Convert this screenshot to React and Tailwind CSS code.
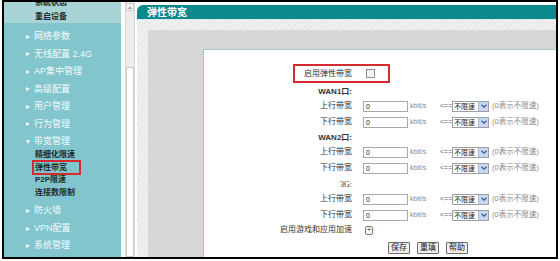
import React from "react";

const CJK = "font-['Liberation_Sans','Noto_Sans_CJK_SC',sans-serif]";

function Bullet({ open }) {
  return (
    <span className="w-[8px] flex items-center">
      {open ? (
        <span className="block w-0 h-0 border-t-[4px] border-t-white/90 border-x-[2.5px] border-x-transparent" />
      ) : (
        <span className="block w-0 h-0 border-l-[4px] border-l-white/90 border-y-[2.5px] border-y-transparent" />
      )}
    </span>
  );
}

function NavItem({ label, open }) {
  return (
    <div className="h-[17.5px] shrink-0 flex items-center pl-[22px] text-[9px] text-white/95">
      <Bullet open={open} />
      <span>{label}</span>
    </div>
  );
}

function SubItem({ label, active }) {
  return (
    <div className="h-[12.7px] shrink-0 flex items-center pl-[28px] text-[8px] font-bold text-[#1e2a2a]">
      {active ? (
        <span className="w-[49px] h-[15px] border-2 border-[#d52a2e] flex items-center pl-[1px]">
          {label}
        </span>
      ) : (
        <span className="pl-[3px]">{label}</span>
      )}
    </div>
  );
}

function Select() {
  return (
    <div className="w-[37px] h-[11px] border border-[#9aa0a8] bg-white flex">
      <div className="flex-1 text-[7px] leading-[9px] pl-[1px] text-[#222]">不限速</div>
      <div className="w-[10px] bg-[#c8d8f0] border-l border-[#aab8d0] flex items-center justify-center">
        <svg width="6" height="4" viewBox="0 0 6 4">
          <path d="M0.5 0.8 L3 3.2 L5.5 0.8" fill="none" stroke="#3a5a9a" strokeWidth="1.2" />
        </svg>
      </div>
    </div>
  );
}

function Row({ label }) {
  return (
    <div className="h-[16px] flex items-center">
      <div className="w-[148px] text-right">{label}</div>
      <input
        readOnly
        defaultValue="0"
        className="ml-[11px] w-[45px] h-[11px] border border-[#a3aab3] bg-white text-[7px] pl-[2px] text-[#222] outline-none"
      />
      <div className="ml-[2px] w-[30px] text-[7px] text-[#8a8a8a]">kbit/s</div>
      <div className="w-[12px] text-[7px] text-[#666]">{"<=="}</div>
      <Select />
      <div className="ml-[3px] text-[7.5px] text-[#8a8a8a]">(0表示不限速)</div>
    </div>
  );
}

function Header({ label, serif }) {
  return (
    <div className="h-[12px] flex items-center">
      <div
        className={
          "w-[148px] text-right " +
          (serif ? "font-['Liberation_Serif',serif] font-normal" : "font-bold")
        }
      >
        {label}
      </div>
    </div>
  );
}

function Btn({ label }) {
  return (
    <div className="w-[22px] h-[12px] border border-[#6b6b6b] rounded-[1px] bg-[#efefef] flex items-center justify-center text-[8px] text-[#222]">
      {label}
    </div>
  );
}

export default function App() {
  return (
    <div className={"w-[560px] h-[261px] bg-white overflow-hidden " + CJK}>
      <div className="ml-[2px] w-[556px] h-[259px] border-2 border-black flex overflow-hidden">
        {/* Sidebar */}
        <div className="w-[117px] shrink-0 h-full bg-[#82c5cd] flex flex-col overflow-hidden">
          <div className="h-[21px] shrink-0 bg-[#a8d4d6] overflow-hidden pl-[31px] text-[8px] font-bold text-[#1e2a2a]">
            <div className="-mt-[6px] leading-[14px]">系统状态</div>
            <div className="leading-[13px]">重启设备</div>
          </div>
          <div className="pt-[5px] shrink-0 flex flex-col">
            <NavItem label="网络参数" />
            <NavItem label="无线配置 2.4G" />
            <NavItem label="AP集中管理" />
            <NavItem label="高级配置" />
            <NavItem label="用户管理" />
            <NavItem label="行为管理" />
            <NavItem label="带宽管理" open />
            <div className="-mt-[2px] shrink-0 flex flex-col">
              <SubItem label="精细化限速" />
              <SubItem label="弹性带宽" active />
              <SubItem label="P2P限速" />
              <SubItem label="连接数限制" />
            </div>
            <div className="mt-[3px] shrink-0 flex flex-col">
              <NavItem label="防火墙" />
              <NavItem label="VPN配置" />
              <NavItem label="系统管理" />
              <NavItem label="系统状态" />
            </div>
          </div>
        </div>

        {/* Scrollbar strip */}
        <div className="w-[16px] shrink-0 h-full bg-white flex">
          <div className="ml-[4px] w-[10px] h-full bg-[#ececec] border-x border-[#d8d8d8] flex flex-col">
            <div className="h-[8px] shrink-0 mt-[1px] bg-[#f6f6f6] border border-[#cfcfcf] flex items-center justify-center">
              <span className="block w-0 h-0 border-b-[3px] border-b-[#9a9a9a] border-x-[2.5px] border-x-transparent" />
            </div>
            <div className="mt-[56px] flex-1 bg-white border border-[#c9c9c9]" />
          </div>
        </div>

        {/* Main */}
        <div className="flex-1 h-full flex flex-col pt-[3px] bg-white">
          <div className="h-[14px] shrink-0 bg-[#0b898c] rounded-tl-[6px] flex items-center pl-[10px] text-[10px] font-bold text-white">
            弹性带宽
          </div>
          <div className="flex-1 flex flex-col pl-[11px] pt-[10px] border-t border-[#d9ecec] bg-[image:repeating-linear-gradient(135deg,#efefef_0px,#efefef_3px,#e6e6e6_3px,#e6e6e6_4px)]">
            <div className="flex-1 flex flex-col pl-[55px] pt-[19px] bg-[#d7d7d7]">
              <div className="flex-1 bg-white border-l border-t border-[#a7c6c6] flex flex-col text-[8px] text-[#333]">
                <div className="mt-[14px] ml-[89px] w-[97px] h-[19px] border-2 border-[#d52a2e] flex items-center">
                  <span className="w-[57px] text-right">启用弹性带宽</span>
                  <span className="ml-[14px] w-[9px] h-[9px] border border-[#8c8c8c] bg-[#f2f2f2]" />
                </div>
                <div className="mt-[3px] flex flex-col">
                  <Header label="WAN1口:" />
                  <Row label="上行带宽" />
                  <Row label="下行带宽" />
                </div>
                <div className="mt-[2px] flex flex-col">
                  <Header label="WAN2口:" />
                  <Row label="上行带宽" />
                  <Row label="下行带宽" />
                </div>
                <div className="mt-[3px] flex flex-col">
                  <Header label="3G:" serif />
                  <Row label="上行带宽" />
                  <Row label="下行带宽" />
                </div>
                <div className="h-[14px] flex items-center">
                  <div className="w-[148px] text-right">启用游戏和应用加速</div>
                  <div className="ml-[13px] w-[8px] h-[9px] border border-[#777] rounded-[2px] flex items-center justify-center text-[8px] leading-none text-[#333]">
                    +
                  </div>
                </div>
                <div className="mt-[4px] h-[14px] flex items-center pl-[184px] gap-[7px]">
                  <Btn label="保存" />
                  <Btn label="重填" />
                  <Btn label="帮助" />
                </div>
              </div>
            </div>
          </div>
        </div>
      </div>
    </div>
  );
}
